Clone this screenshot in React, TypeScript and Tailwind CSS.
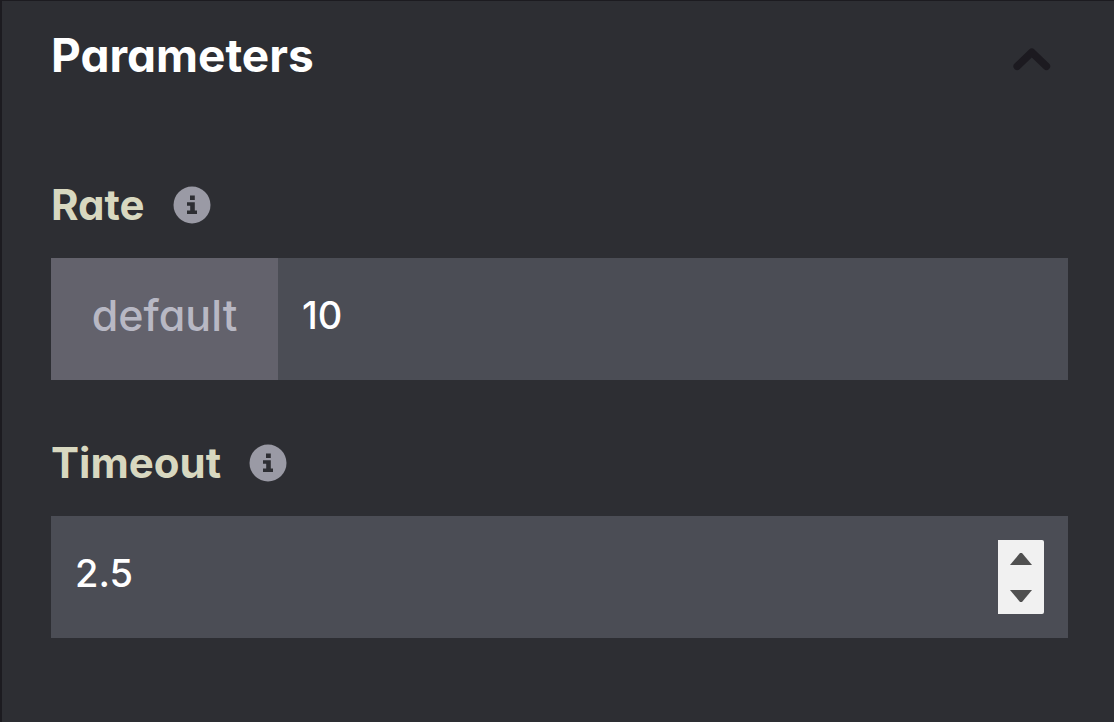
import { useState } from "react";
import type { ReactNode } from "react";

function InfoIcon() {
  return (
    <svg width="38" height="38" viewBox="0 0 38 38" aria-hidden="true">
      <circle cx="19" cy="19" r="18.5" fill="#9a9aa5" />
      <path
        d="M17 9.5h4.8v4.4H17zM14 16.2h7.8v8.2H24V28H14v-3.6h3.2v-4.6H14z"
        fill="#2d2e33"
      />
    </svg>
  );
}

function FieldLabel({ htmlFor, children }: { htmlFor: string; children: ReactNode }) {
  return (
    <div className="flex h-12 items-center gap-7">
      <label htmlFor={htmlFor} className="text-[42px] leading-12 font-bold text-[#d8d8c0]">
        {children}
      </label>
      <button type="button" aria-label="More information">
        <InfoIcon />
      </button>
    </div>
  );
}

export default function App() {
  const [open, setOpen] = useState(true);
  const [rate, setRate] = useState("10");
  const [timeout, setTimeoutValue] = useState("2.5");

  const step = (delta: number) =>
    setTimeoutValue((value) => String(Number(value) + delta));

  return (
    <main className="min-h-screen border-t border-l-2 border-[#1c1b20] bg-[#2d2e33] pr-[46px] pb-20 pl-[49px] font-['Inter','Liberation_Sans',sans-serif] [font-feature-settings:'cv11']">
      <header className="flex items-center justify-between pt-[27px] pr-[17px]">
        <h1 className="text-[46px] leading-[54px] font-bold text-white">Parameters</h1>
        <button
          type="button"
          aria-label="Toggle parameters"
          aria-expanded={open}
          onClick={() => setOpen(!open)}
          className="mt-2 text-[#1c1a20]"
        >
          <svg width="38" height="24" viewBox="0 0 38 24" fill="none" aria-hidden="true">
            <path
              d="M4.2 19.3 18.8 5.2 33.4 19.3"
              stroke="currentColor"
              strokeWidth="7.5"
              strokeLinecap="round"
              strokeLinejoin="round"
            />
          </svg>
        </button>
      </header>

      {open && (
        <div className="flex flex-col gap-[59px] pt-[99px]">
          <section className="flex flex-col gap-[29px]">
            <FieldLabel htmlFor="rate">Rate</FieldLabel>
            <div className="flex h-[122px] bg-[#4b4d55]">
              <span className="flex w-[227px] items-center justify-center bg-[#63626c] pb-2 text-[43px] leading-12 font-medium text-[#b8b8c4]">
                default
              </span>
              <input
                id="rate"
                type="text"
                value={rate}
                onChange={(event) => setRate(event.target.value)}
                className="min-w-0 flex-1 bg-transparent px-6 pb-2 text-[38px] font-medium text-white outline-none"
              />
            </div>
          </section>

          <section className="flex flex-col gap-[29px]">
            <FieldLabel htmlFor="timeout">Timeout</FieldLabel>
            <div className="flex h-[122px] items-center bg-[#4b4d55] pr-6">
              <input
                id="timeout"
                type="text"
                inputMode="decimal"
                value={timeout}
                onChange={(event) => setTimeoutValue(event.target.value)}
                className="h-full min-w-0 flex-1 bg-transparent px-6 pb-2 text-[38px] font-medium text-white outline-none"
              />
              <div className="flex h-[74px] w-[46px] flex-col rounded-r-[2px] bg-[#f1f1f1] text-[#505050]">
                <button
                  type="button"
                  aria-label="Increase timeout"
                  onClick={() => step(0.5)}
                  className="flex flex-1 items-center justify-center"
                >
                  <svg width="22" height="12" viewBox="0 0 22 12" fill="currentColor" aria-hidden="true">
                    <path d="M0 12 10 0h2l10 12z" />
                  </svg>
                </button>
                <button
                  type="button"
                  aria-label="Decrease timeout"
                  onClick={() => step(-0.5)}
                  className="flex flex-1 items-center justify-center"
                >
                  <svg width="22" height="12" viewBox="0 0 22 12" fill="currentColor" aria-hidden="true">
                    <path d="M0 0h22L12 12h-2z" />
                  </svg>
                </button>
              </div>
            </div>
          </section>
        </div>
      )}
    </main>
  );
}
